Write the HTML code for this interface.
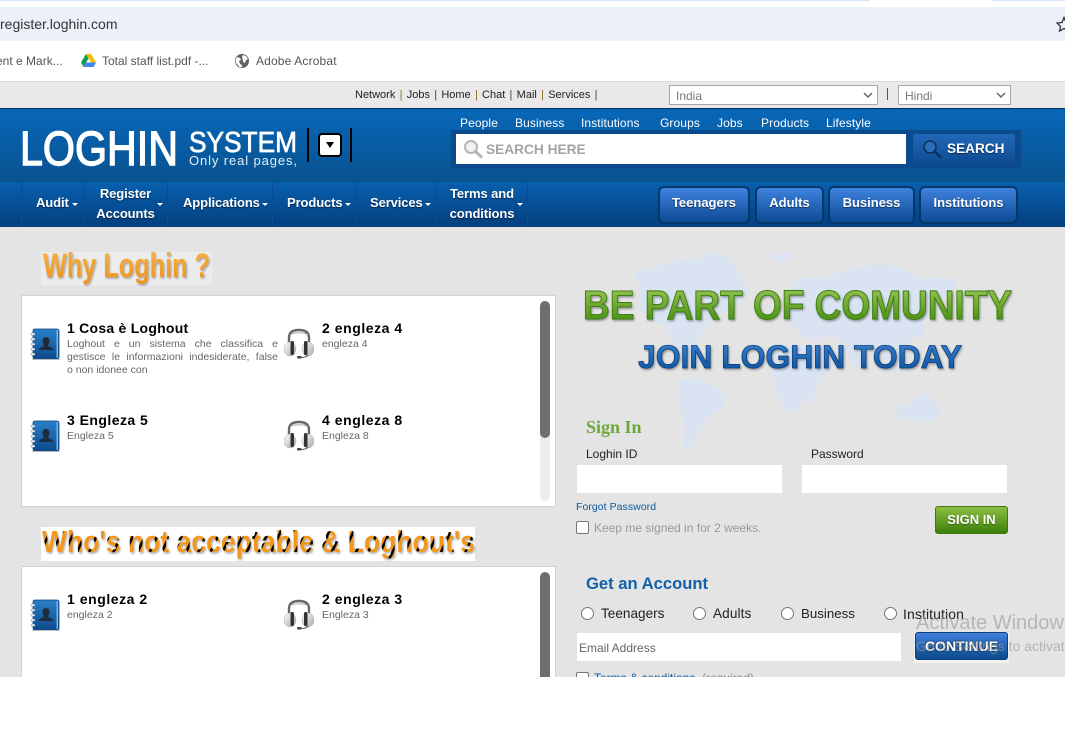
<!DOCTYPE html>
<html><head><meta charset="utf-8"><title>Loghin</title>
<style>
html,body{margin:0;padding:0;width:1065px;height:745px;overflow:hidden;background:#fff;font-family:"Liberation Sans",sans-serif}
#p{position:relative;width:1065px;height:745px;overflow:hidden}
.a{position:absolute}
.t{position:absolute;white-space:nowrap;line-height:16px;height:16px}
.top{font-size:11px;color:#222;top:87px}
.sn{font-size:12px;color:#fff;top:115px;letter-spacing:.1px}
.nv{font-size:13px;font-weight:bold;color:#fff;text-shadow:0 1px 1px rgba(0,0,0,.55);letter-spacing:-.1px}
.sep{position:absolute;top:182px;width:1px;height:45px;background:#0a4d92}
.ar{position:absolute;width:0;height:0;border-left:3px solid transparent;border-right:3px solid transparent;border-top:3px solid #fff}
.bt{position:absolute;top:186px;height:34px;border:2px solid #06376b;border-radius:6px;background:linear-gradient(#3f82de,#0c4b94);color:#fff;font-weight:bold;font-size:13px;line-height:30px;text-align:center;text-shadow:0 1px 1px rgba(0,0,0,.5)}
.ti{font-size:14px;font-weight:bold;color:#000;letter-spacing:.55px}
.de{font-size:10.5px;color:#666}
.jl{position:absolute;left:67px;width:211px;height:13px;line-height:13px;text-align:justify;text-align-last:justify;white-space:nowrap}
.inp{position:absolute;background:#fff}
.lb{font-size:12px;color:#222}
.rd{position:absolute;width:11px;height:11px;border:1px solid #767676;border-radius:50%;background:#fff;top:607px}
.rt{font-size:13.6px;color:#222;top:606px}
.cb{position:absolute;width:11px;height:11px;border:1px solid #767676;border-radius:2px;background:#fff}
</style></head><body><div id="p">
<svg width="0" height="0" style="position:absolute"><defs>
<linearGradient id="bk" x1="0" y1="0" x2="0" y2="1"><stop offset="0" stop-color="#2a80c8"/><stop offset="1" stop-color="#0d4a8c"/></linearGradient>
<linearGradient id="ear" x1="0" y1="0" x2="1" y2="1"><stop offset="0" stop-color="#fff"/><stop offset="1" stop-color="#aaa"/></linearGradient>
<symbol id="book" viewBox="0 0 30 32"><rect x="3" y="1" width="26" height="30" rx="2" fill="url(#bk)" stroke="#0c447f" stroke-width=".8"/><rect x="26.500" y="2" width="1.500" height="28" fill="#7fb4e0"/><path d="M2 31.500h28" stroke="#bbb" stroke-width="1"/><g fill="#e8eef5" stroke="#5a7690" stroke-width=".4"><rect x="1" y="5" width="4" height="2.400" rx="1"/><rect x="1" y="10" width="4" height="2.400" rx="1"/><rect x="1" y="15" width="4" height="2.400" rx="1"/><rect x="1" y="20" width="4" height="2.400" rx="1"/><rect x="1" y="25" width="4" height="2.400" rx="1"/></g><path d="M16 9c2.500 0 3.500 2 3.500 4 0 2-1 3.500-1.500 4.500 0 1 4 1.500 5 3.500v1H9v-1c1-2 5-2.500 5-3.500-.5-1-1.500-2.500-1.500-4.500 0-2 1-4 3.500-4z" fill="#1d2c3c"/></symbol>
<symbol id="head" viewBox="0 0 30 32"><path d="M5 17V10C5 4 9 2 15 2s10 2 10 8v7" fill="none" stroke="#666" stroke-width="2.400"/><path d="M6 7C9 4 21 4 24 7" fill="none" stroke="#aaa" stroke-width="1"/><ellipse cx="6" cy="21" rx="6" ry="7" fill="url(#ear)" stroke="#aaa" stroke-width=".5"/><ellipse cx="24" cy="21" rx="6" ry="7" fill="url(#ear)" stroke="#aaa" stroke-width=".5"/><rect x="6.500" y="13" width="3.500" height="14" rx="1.500" fill="#333"/><rect x="20" y="13" width="3.500" height="14" rx="1.500" fill="#333"/><path d="M24 27c-1 1.500-4 2.500-7 2.500" fill="none" stroke="#444" stroke-width="1"/><rect x="13" y="28" width="4.500" height="2.500" rx="1" fill="#444"/></symbol>
</defs></svg>

<!-- browser chrome -->
<div class="a" style="left:0;top:0;width:870px;height:1px;background:#d6e4fa"></div>
<div class="a" style="left:992px;top:0;width:73px;height:1px;background:#d6e4fa"></div>
<div class="a" style="left:0;top:7px;width:1065px;height:34px;background:#ecf1f9"></div>
<div class="t" style="left:0;top:16px;font-size:14px;color:#333">register.loghin.com</div>
<svg class="a" style="left:1056px;top:16px" width="9" height="16" viewBox="0 0 9 16"><path d="M8 1.500L10 6.500L15 7L11.500 10.500L12.500 15L8 12.500L3.500 15L4.500 10.500L1 7L6 6.500Z" fill="none" stroke="#333" stroke-width="1.300"/></svg>
<div class="t" style="left:-4px;top:53px;font-size:12px;color:#555">ent e Mark...</div>
<svg class="a" style="left:81px;top:54px" width="15" height="13" viewBox="0 0 15 13"><path d="M5 0h5l5 8.500h-5z" fill="#fbbc04"/><path d="M5 0L0 8.500 2.500 13l5-8.500z" fill="#0f9d58"/><path d="M2.500 13h10l2.500-4.500H5z" fill="#4285f4"/></svg>
<div class="t" style="left:102px;top:53px;font-size:12px;color:#555">Total staff list.pdf -...</div>
<svg class="a" style="left:235px;top:54px" width="14" height="14" viewBox="0 0 14 14"><circle cx="7" cy="7" r="7" fill="#5f6368"/><path d="M2 3l3 1 1 2-2 1 1 3 2 1v2l-2 .5L1 9 .5 6zM8 1l3 1 2 3-2 1-1 3-2-1V6L7 3z" fill="#fff"/></svg>
<div class="t" style="left:256px;top:53px;font-size:12px;color:#555;letter-spacing:.15px">Adobe Acrobat</div>
<div class="a" style="left:0;top:81px;width:1065px;height:1px;background:#dcdcdc"></div>

<!-- page background -->
<div class="a" style="left:0;top:82px;width:1065px;height:595px;background:#e4e4e4"></div>
<div class="a" style="left:0;top:82px;width:1065px;height:26px;background:#e9e9e9"></div>
<div class="a" style="left:0;top:108px;width:1065px;height:1px;background:#0a2f55"></div>

<!-- top links -->
<div class="t top" style="left:355px;word-spacing:1.2px">Network <span style="color:#8a6a20">|</span> Jobs <span style="color:#444">|</span> Home <span style="color:#8a6a20">|</span> Chat <span style="color:#444">|</span> Mail <span style="color:#8a6a20">|</span> Services <span style="color:#444">|</span></div>
<div class="a" style="left:669px;top:85px;width:207px;height:18px;border:1px solid #a9a9a9;background:#fff"></div>
<div class="t" style="left:676px;top:88px;font-size:12px;color:#777">India</div>
<svg class="a" style="left:863px;top:92px" width="10" height="7"><path d="M1 1l4 4 4-4" fill="none" stroke="#666" stroke-width="1.500"/></svg>
<div class="a" style="left:887px;top:88px;width:1px;height:12px;background:#555"></div>
<div class="a" style="left:898px;top:85px;width:111px;height:18px;border:1px solid #a9a9a9;background:#fff"></div>
<div class="t" style="left:905px;top:88px;font-size:12px;color:#777">Hindi</div>
<svg class="a" style="left:996px;top:92px" width="10" height="7"><path d="M1 1l4 4 4-4" fill="none" stroke="#666" stroke-width="1.500"/></svg>

<!-- header -->
<div class="a" style="left:0;top:109px;width:1065px;height:73px;background:linear-gradient(#0867b8,#08528f)"></div>
<svg class="a" style="left:0;top:120px" width="310" height="55">
<text x="20" y="45" font-family="Liberation Sans" font-size="48" fill="#fff" stroke="#fff" stroke-width="1.400" textLength="158" lengthAdjust="spacingAndGlyphs">LOGHIN</text>
<text x="189" y="32" font-family="Liberation Sans" font-size="29" fill="#fff" stroke="#fff" stroke-width=".7" textLength="108" lengthAdjust="spacingAndGlyphs">SYSTEM</text>
<text x="189" y="45" font-family="Liberation Sans" font-size="13" fill="#e6eef7" textLength="108" lengthAdjust="spacing">Only real pages,</text>
</svg>
<div class="a" style="left:307px;top:128px;width:2px;height:34px;background:#000"></div>
<div class="a" style="left:350px;top:128px;width:2px;height:34px;background:#000"></div>
<div class="a" style="left:318px;top:133px;width:20px;height:20px;border:2px solid #000;border-radius:4px;background:#fff"></div>
<div class="a" style="left:326px;top:142px;width:0;height:0;border-left:4px solid transparent;border-right:4px solid transparent;border-top:6px solid #000"></div>

<div class="t sn" style="left:460px">People</div>
<div class="t sn" style="left:515px">Business</div>
<div class="t sn" style="left:581px">Institutions</div>
<div class="t sn" style="left:660px">Groups</div>
<div class="t sn" style="left:717px">Jobs</div>
<div class="t sn" style="left:761px">Products</div>
<div class="t sn" style="left:826px">Lifestyle</div>

<div class="a" style="left:451px;top:130px;width:570px;height:38px;background:#0b4a8c"></div>
<div class="a" style="left:456px;top:134px;width:450px;height:30px;background:#fff"></div>
<svg class="a" style="left:463px;top:139px" width="21" height="20" viewBox="0 0 21 20"><circle cx="8" cy="8" r="6" fill="#f2f2f2" stroke="#b5b5b5" stroke-width="2"/><path d="M12.500 12.500L19 18.500" stroke="#b5b5b5" stroke-width="3"/></svg>
<div class="t" style="left:486px;top:142px;font-size:13.7px;font-weight:bold;color:#a3a3a3">SEARCH HERE</div>
<div class="a" style="left:913px;top:134px;width:102px;height:29px;border-radius:2px;background:linear-gradient(#2268b8,#0d4c92)"></div>
<svg class="a" style="left:922px;top:139px" width="21" height="20" viewBox="0 0 21 20"><circle cx="8" cy="8" r="6" fill="#2a6fbc" stroke="#0c2f58" stroke-width="1.500"/><path d="M12.500 12.500L19 18.500" stroke="#0c2f58" stroke-width="2.500"/></svg>
<div class="t" style="left:947px;top:141px;font-size:13.6px;font-weight:bold;color:#fff;text-shadow:0 1px 1px rgba(0,0,0,.5)">SEARCH</div>

<!-- nav -->
<div class="a" style="left:0;top:182px;width:1065px;height:45px;background:linear-gradient(#0860ae,#043f7e)"></div>
<div class="sep" style="left:21px"></div><div class="sep" style="left:83px"></div><div class="sep" style="left:167px"></div><div class="sep" style="left:272px"></div><div class="sep" style="left:355px"></div><div class="sep" style="left:435px"></div><div class="sep" style="left:527px"></div>
<div class="t nv" style="left:36px;top:195px">Audit</div><div class="ar" style="left:72px;top:203px"></div>
<div class="t nv" style="left:83px;width:85px;text-align:center;top:186px">Register</div>
<div class="t nv" style="left:83px;width:85px;text-align:center;top:206px">Accounts</div><div class="ar" style="left:157px;top:203px"></div>
<div class="t nv" style="left:183px;top:195px">Applications</div><div class="ar" style="left:262px;top:203px"></div>
<div class="t nv" style="left:287px;top:195px">Products</div><div class="ar" style="left:345px;top:203px"></div>
<div class="t nv" style="left:370px;top:195px">Services</div><div class="ar" style="left:425px;top:203px"></div>
<div class="t nv" style="left:435px;width:94px;text-align:center;top:186px">Terms and</div>
<div class="t nv" style="left:435px;width:94px;text-align:center;top:206px">conditions</div><div class="ar" style="left:517px;top:203px"></div>

<div class="bt" style="left:658px;width:88px">Teenagers</div>
<div class="bt" style="left:755px;width:65px">Adults</div>
<div class="bt" style="left:828px;width:83px">Business</div>
<div class="bt" style="left:919px;width:95px">Institutions</div>

<!-- world map -->
<svg class="a" style="left:600px;top:250px" width="440" height="230" viewBox="600 250 440 230"><g fill="#d9e3f1">
<path d="M635 272L650 270L668 262L700 258L712 253L725 255L737 268L745 285L750 290L735 305L715 318L700 335L695 350L705 365L690 360L675 345L665 325L650 322L637 305L640 290Z"/>
<path d="M772 256l14-4 6 3-10 8-10-3z"/>
<path d="M680 380L700 378L727 393L722 408L705 420L698 435L690 450L684 447L685 425L678 400Z"/>
<path d="M790 290L800 278L825 278L845 270L870 266L875 262L900 268L920 278L950 278L957 282L950 295L940 298L925 320L922 340L915 335L905 350L895 375L888 365L878 345L865 352L858 370L850 360L842 340L830 335L815 340L800 335L790 320L790 305Z"/>
<path d="M770 345L815 345L835 365L820 380L810 395L795 410L785 412L778 395L773 375Z"/>
<path d="M812 385l4 3-3 14-4 2z"/>
<path d="M897 407L909 405L917 397L927 393L942 413L930 421L915 422L905 418L897 418Z"/>
<path d="M960 430l8-6-3 4-8 8z"/>
</g></svg>

<!-- left column -->
<div class="a" style="left:41px;top:252px;width:171px;height:33px;background:#ececec"></div>
<svg class="a" style="left:41px;top:248px" width="175" height="42"><defs><linearGradient id="og" x1="0" y1="0" x2="0" y2="1"><stop offset="0" stop-color="#f6b440"/><stop offset="1" stop-color="#ef8f1c"/></linearGradient><filter id="ds" x="-5%" y="-10%" width="110%" height="130%"><feDropShadow dx="1" dy="1.500" stdDeviation="1" flood-color="#000" flood-opacity=".35"/></filter></defs>
<text x="2" y="29" font-family="Liberation Sans" font-weight="bold" font-size="34" fill="url(#og)" filter="url(#ds)" textLength="167" lengthAdjust="spacingAndGlyphs">Why Loghin ?</text></svg>

<div class="a" style="left:21px;top:295px;width:533px;height:210px;background:#fff;border:1px solid #d2d2d2"></div>
<div class="a" style="left:540px;top:301px;width:10px;height:200px;border-radius:5px;background:#ececec"></div>
<div class="a" style="left:540px;top:301px;width:10px;height:137px;border-radius:5px;background:#6e6e6e"></div>
<svg class="a" style="left:30px;top:328px" width="30" height="32"><use href="#book"/></svg>
<div class="t ti" style="left:67px;top:320px;letter-spacing:.25px">1 Cosa è Loghout</div>
<div class="jl de" style="top:338px">Loghout e un sistema che classifica e</div>
<div class="jl de" style="top:351px">gestisce le informazioni indesiderate, false</div>
<div class="t de" style="left:67px;top:362px">o non idonee con</div>
<svg class="a" style="left:284px;top:328px" width="30" height="32"><use href="#head"/></svg>
<div class="t ti" style="left:322px;top:320px">2 engleza 4</div>
<div class="t de" style="left:322px;top:336px">engleza 4</div>
<svg class="a" style="left:30px;top:420px" width="30" height="32"><use href="#book"/></svg>
<div class="t ti" style="left:67px;top:412px;letter-spacing:.45px">3 Engleza 5</div>
<div class="t de" style="left:67px;top:428px">Engleza 5</div>
<svg class="a" style="left:284px;top:420px" width="30" height="32"><use href="#head"/></svg>
<div class="t ti" style="left:322px;top:412px">4 engleza 8</div>
<div class="t de" style="left:322px;top:428px">Engleza 8</div>

<div class="a" style="left:41px;top:527px;width:434px;height:34px;background:#fff"></div>
<svg class="a" style="left:41px;top:522px" width="436" height="42"><defs><pattern id="st" width="11" height="20" patternUnits="userSpaceOnUse" patternTransform="rotate(25)"><rect width="11" height="20" fill="#f2961a"/><rect width="2.600" height="20" fill="#000"/></pattern></defs>
<text x="1" y="30" font-family="Liberation Sans" font-weight="bold" font-size="31" fill="url(#st)" filter="url(#ds)" textLength="433" lengthAdjust="spacingAndGlyphs">Who's not acceptable &amp; Loghout's</text></svg>

<div class="a" style="left:21px;top:566px;width:533px;height:111px;background:#fff;border:1px solid #d2d2d2;border-bottom:0;box-sizing:content-box"></div>
<div class="a" style="left:540px;top:572px;width:10px;height:105px;border-radius:5px 5px 0 0;background:#6e6e6e"></div>
<svg class="a" style="left:30px;top:599px" width="30" height="32"><use href="#book"/></svg>
<div class="t ti" style="left:67px;top:591px">1 engleza 2</div>
<div class="t de" style="left:67px;top:607px">engleza 2</div>
<svg class="a" style="left:284px;top:599px" width="30" height="32"><use href="#head"/></svg>
<div class="t ti" style="left:322px;top:591px">2 engleza 3</div>
<div class="t de" style="left:322px;top:607px">Engleza 3</div>

<!-- right headings -->
<svg class="a" style="left:575px;top:280px" width="450" height="100"><defs>
<linearGradient id="gg" x1="0" y1="0" x2="0" y2="1"><stop offset="0" stop-color="#a4cc5c"/><stop offset="1" stop-color="#3a8606"/></linearGradient>
<linearGradient id="bb" x1="0" y1="0" x2="0" y2="1"><stop offset="0" stop-color="#3d83d8"/><stop offset="1" stop-color="#0a4f96"/></linearGradient></defs>
<text x="8" y="39" font-family="Liberation Sans" font-weight="bold" font-size="41" fill="url(#gg)" stroke="#3c7d12" stroke-width="1" filter="url(#ds)" textLength="429" lengthAdjust="spacingAndGlyphs">BE PART OF COMUNITY</text>
<text x="63" y="88" font-family="Liberation Sans" font-weight="bold" font-size="32" fill="url(#bb)" stroke="#0b3f78" stroke-width=".8" filter="url(#ds)" textLength="324" lengthAdjust="spacingAndGlyphs">JOIN LOGHIN TODAY</text></svg>

<!-- sign in -->
<div class="t" style="left:586px;top:419px;font-family:'Liberation Serif',serif;font-weight:bold;font-size:18px;color:#6ea83c">Sign In</div>
<div class="t lb" style="left:586px;top:446px">Loghin ID</div>
<div class="t lb" style="left:811px;top:446px">Password</div>
<div class="inp" style="left:577px;top:465px;width:205px;height:28px"></div>
<div class="inp" style="left:802px;top:465px;width:205px;height:28px"></div>
<div class="t" style="left:576px;top:499px;font-size:10.5px;color:#0d5aa0;letter-spacing:.05px">Forgot Password</div>
<div class="cb" style="left:576px;top:521px"></div>
<div class="t" style="left:594px;top:520px;font-size:12px;color:#999">Keep me signed in for 2 weeks.</div>
<div class="a" style="left:935px;top:506px;width:71px;height:26px;border:1px solid #3e7a10;border-radius:3px;background:linear-gradient(#8dbe42,#3c8008);color:#fff;font-weight:bold;font-size:13px;line-height:26px;text-align:center;text-shadow:0 1px 1px rgba(0,0,0,.4)">SIGN IN</div>

<!-- account -->
<div class="t" style="left:586px;top:576px;font-size:16.6px;font-weight:bold;color:#1160aa">Get an Account</div>
<div class="rd" style="left:581px"></div><div class="t rt" style="left:601px">Teenagers</div>
<div class="rd" style="left:693px"></div><div class="t rt" style="left:713px;letter-spacing:.1px">Adults</div>
<div class="rd" style="left:781px"></div><div class="t rt" style="left:801px;font-size:13.3px">Business</div>
<div class="rd" style="left:884px"></div><div class="t rt" style="left:903px;font-size:14px;letter-spacing:.1px">Institution</div>
<div class="inp" style="left:577px;top:633px;width:324px;height:28px"></div>
<div class="t" style="left:579px;top:640px;font-size:12px;color:#666">Email Address</div>
<div class="a" style="left:914px;top:632px;width:95px;height:31px;background:#f2f2f2"></div>
<div class="a" style="left:915px;top:632px;width:91px;height:26px;border:1px solid #0b3f78;border-radius:3px;background:linear-gradient(#3f81dc,#0a4a8c);color:#fff;font-weight:bold;font-size:14px;line-height:26px;text-align:center;text-shadow:0 0 2px #123">CONTINUE</div>
<div class="a" style="left:0;top:664px;width:1065px;height:13px;overflow:hidden">
  <div class="cb" style="left:576px;top:8px"></div>
  <div class="t" style="left:594px;top:6px;font-size:12px;color:#0d5aa0;text-decoration:underline">Terms &amp; conditions</div>
  <div class="t" style="left:702px;top:6px;font-size:12px;color:#888">(required)</div>
</div>
<div class="t" style="left:916px;top:612px;font-size:20px;line-height:22px;height:22px;color:rgba(150,150,150,.6)">Activate Windows</div>
<div class="t" style="left:916px;top:638px;font-size:14px;color:rgba(150,150,150,.65)">Go to Settings to activate</div>
<div class="a" style="left:0;top:677px;width:1065px;height:68px;background:#fff"></div>
</div></body></html>
